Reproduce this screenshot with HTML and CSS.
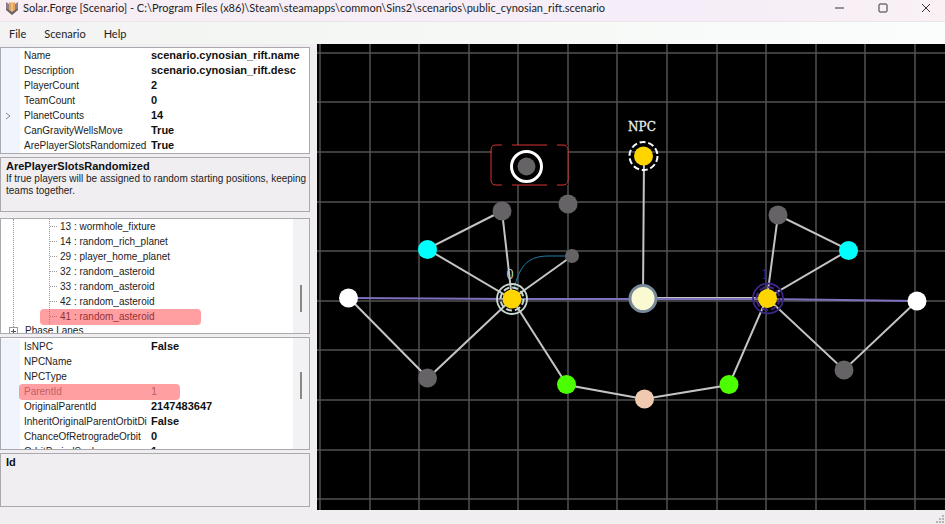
FILE: index.html
```html
<!DOCTYPE html>
<html lang="en">
<head>
  <meta charset="UTF-8">
  <meta name="viewport" content="width=device-width, initial-scale=1.0">
  <title>Solar.Forge</title>
  <link rel="stylesheet" href="styles.css">
</head>
<body>
  <header class="titlebar">
    <svg class="logo" viewBox="0 0 14 14">
      <path d="M1 1L4 3V10L1 7Z" fill="#8b7f86"/>
      <path d="M13 1L10 3V10L13 7Z" fill="#8b7f86"/>
      <path d="M4 1L6 2V11L4 9Z" fill="#e3a35c"/>
      <path d="M10 1L8 2V11L10 9Z" fill="#e3a35c"/>
      <path d="M6 1H8V13H6Z" fill="#f0bd7b"/>
      <path d="M1 7L7 11L13 7V9L7 14L1 9Z" fill="#6d5f66"/>
    </svg>
    <h1>Solar.Forge [Scenario] - C:\Program Files (x86)\Steam\steamapps\common\Sins2\scenarios\public_cynosian_rift.scenario</h1>
    <div class="window-buttons">
      <button aria-label="Minimize"><svg viewBox="0 0 10 10"><path d="M0 5H9"/></svg></button>
      <button aria-label="Maximize"><svg viewBox="0 0 10 10"><rect x="1" y="1" width="8" height="8" rx="1"/></svg></button>
      <button aria-label="Close"><svg viewBox="0 0 10 10"><path d="M1 1L9 9M9 1L1 9"/></svg></button>
    </div>
  </header>

  <nav class="menu">
    <button>File</button>
    <button>Scenario</button>
    <button>Help</button>
  </nav>

  <main>
    <aside>
      <div class="panel">
        <table class="props">
          <tr><td></td><th>Name</th><td>scenario.cynosian_rift.name</td></tr>
          <tr><td></td><th>Description</th><td>scenario.cynosian_rift.desc</td></tr>
          <tr><td></td><th>PlayerCount</th><td>2</td></tr>
          <tr><td></td><th>TeamCount</th><td>0</td></tr>
          <tr><td><svg class="chevron" viewBox="0 0 6 8"><path d="M1 1L5 4L1 7"/></svg></td><th>PlanetCounts</th><td>14</td></tr>
          <tr><td></td><th>CanGravityWellsMove</th><td>True</td></tr>
          <tr><td></td><th>ArePlayerSlotsRandomized</th><td>True</td></tr>
        </table>
      </div>

      <div class="panel help">
        <h2>ArePlayerSlotsRandomized</h2>
        <p>If true players will be assigned to random starting positions, keeping teams together.</p>
      </div>

      <div class="panel tree">
        <ul class="wells">
          <li>13 : wormhole_fixture</li>
          <li>14 : random_rich_planet</li>
          <li>29 : player_home_planet</li>
          <li>32 : random_asteroid</li>
          <li>33 : random_asteroid</li>
          <li>42 : random_asteroid</li>
          <li class="marked">41 : random_asteroid</li>
        </ul>
        <div class="root"><span class="expander"></span>Phase Lanes</div>
        <span class="thumb"></span>
      </div>

      <div class="panel node-props">
        <table class="props">
          <tr><td></td><th>IsNPC</th><td>False</td></tr>
          <tr><td></td><th>NPCName</th><td></td></tr>
          <tr><td></td><th>NPCType</th><td></td></tr>
          <tr class="marked readonly"><td></td><th>ParentId</th><td>1</td></tr>
          <tr><td></td><th>OriginalParentId</th><td>2147483647</td></tr>
          <tr><td></td><th>InheritOriginalParentOrbitDirection</th><td>False</td></tr>
          <tr><td></td><th>ChanceOfRetrogradeOrbit</th><td>0</td></tr>
          <tr><td></td><th>OrbitPeriodScalar</th><td>1</td></tr>
        </table>
        <span class="thumb"></span>
      </div>

      <div class="panel help">
        <h2>Id</h2>
      </div>
    </aside>

    <svg class="map" viewBox="0 0 628 466" preserveAspectRatio="xMidYMid slice">
      <rect width="628" height="466" fill="#000"/>
      <path class="grid" d="M3 0V466M53 0V466M102 0V466M152 0V466M201 0V466M251 0V466M300 0V466M350 0V466M400 0V466M449 0V466M499 0V466M548 0V466M598 0V466
        M0 9H628M0 58H628M0 108H628M0 158H628M0 207H628M0 257H628M0 306H628M0 356H628M0 406H628M0 455H628"/>

      <!-- phase lanes -->
      <path class="lane" d="M185 167L110 205L195 255L185 167M255 212L195 255L111 334L32 254M195 255L250 341L327 355L412 341L450 254L461 171L532 206L450 254L527 326L600 257M326 254L327 112"/>
      <path class="lane" d="M326 254L450 254"/>
      <path class="wormhole" d="M32 254L195 255L326 255L450 255L600 257"/>
      <path class="orbit" d="M197 245C203 219 213 212 232 212H255"/>

      <!-- selection -->
      <rect x="175" y="101" width="76" height="40" fill="#000"/>
      <path class="selection" d="M185 101H179Q174 101 174 106V136Q174 141 179 141H185M195 101H230M195 141H230M240 101H246Q251 101 251 106V136Q251 141 246 141H240"/>
      <circle cx="209.5" cy="122.5" r="15" fill="#000" stroke="#fff" stroke-width="3"/>

      <g fill="#656365">
        <circle cx="209.5" cy="122.5" r="9"/>
        <circle cx="251" cy="160" r="9.5"/>
        <circle cx="185" cy="167" r="9.5"/>
        <circle cx="255" cy="212" r="7"/>
        <circle cx="110.5" cy="334" r="9.5"/>
        <circle cx="461" cy="171" r="9.5"/>
        <circle cx="527" cy="326" r="9.5"/>
      </g>
      <g fill="#0ff">
        <circle cx="110.5" cy="205.5" r="9.5"/>
        <circle cx="531.5" cy="206.5" r="9.5"/>
      </g>
      <g fill="#fff">
        <circle cx="31.5" cy="254" r="9.5"/>
        <circle cx="600" cy="257" r="9.5"/>
      </g>
      <g fill="#4cff00">
        <circle cx="249.5" cy="340.5" r="9.5"/>
        <circle cx="412" cy="340.5" r="9.5"/>
      </g>
      <circle cx="327.5" cy="355" r="9.5" fill="#f0cab0"/>
      <circle cx="326" cy="254.5" r="13" fill="#fafad2" stroke="#778899" stroke-width="3"/>

      <!-- home stars -->
      <circle cx="326.5" cy="112" r="14" fill="none" stroke="#fff" stroke-width="2" stroke-dasharray="6 2.8"/>
      <g fill="none" stroke="#c8d8d0">
        <circle cx="195" cy="255" r="15" stroke-width="1.8"/>
        <circle cx="195" cy="255" r="11.5" stroke-width="2" stroke-dasharray="6 3"/>
      </g>
      <g fill="none" stroke="#3c2585">
        <circle cx="451" cy="254.5" r="15" stroke-width="1.8"/>
        <circle cx="451" cy="254.5" r="11.5" stroke-width="2" stroke-dasharray="6 3"/>
      </g>
      <g fill="#ffd500">
        <circle cx="326.5" cy="112" r="9.5"/>
        <circle cx="195" cy="255" r="9.5"/>
        <circle cx="450.5" cy="254.5" r="9.5"/>
      </g>

      <text class="npc" x="325" y="87">NPC</text>
      <text class="slot" x="193" y="235" fill="#b5d3cc">0</text>
      <text class="slot" x="448" y="235" fill="#3c2585">1</text>
    </svg>
  </main>

  <footer>
    <svg class="grip" viewBox="0 0 9 9"><path d="M6 0h2v2h-2zM6 3h2v2h-2zM6 6h2v2h-2zM3 3h2v2h-2zM3 6h2v2h-2zM0 6h2v2h-2z"/></svg>
  </footer>
</body>
</html>
```
FILE: styles.css
```css
* {
  box-sizing: border-box;
}

body {
  display: flex;
  flex-direction: column;
  height: 100vh;
  margin: 0;
  overflow: hidden;
  background: #f0eef1;
  color: #222;
  font-family: 'Liberation Sans', Arial, sans-serif;
  font-size: 10px;
}

button {
  padding: 0;
  border: none;
  background: none;
  color: inherit;
  font: inherit;
}

.titlebar {
  display: flex;
  align-items: center;
  height: 22px;
  padding: 0 14px 6px 5px;
  border-bottom: 1px solid #ebe4eb;
  background: linear-gradient(90deg, #f8eef4, #f5edf8 70%, #f9f1f4);
}

.logo {
  width: 14px;
  height: 14px;
  margin-right: 4px;
}

.titlebar h1 {
  flex: 1;
  margin: 0;
  font-family: Lato, sans-serif;
  font-size: 11px;
  font-weight: normal;
  line-height: 16px;
  white-space: nowrap;
}

.window-buttons {
  display: flex;
  gap: 33px;
}

.window-buttons svg {
  display: block;
  width: 10px;
  height: 10px;
  fill: none;
  stroke: #333;
}

.menu {
  display: flex;
  gap: 18px;
  height: 22px;
  padding: 0 9px;
  background: linear-gradient(90deg, #f2f3f2, #f6f9f6 60%, #fafdfc);
  font-family: Lato, sans-serif;
  font-size: 11px;
}

main {
  display: flex;
  flex: 1;
  gap: 7px;
  min-height: 0;
}

aside {
  display: grid;
  grid-template-rows: 107px 55px minmax(0, 120fr) minmax(0, 113fr) 54px;
  gap: 3px;
  width: 310px;
  padding: 3px 0;
}

.panel {
  position: relative;
  overflow: hidden;
  border: 1px solid #a9a9ae;
  background: #fff;
}

.props {
  width: 100%;
  border-collapse: collapse;
  table-layout: fixed;
  background: linear-gradient(90deg, #f0f4fd 19px, transparent 19px);
}

.props tr {
  position: relative;
  height: 15px;
}

.props th,
.props td {
  overflow: hidden;
  padding: 0;
  line-height: 15px;
  text-align: left;
  white-space: nowrap;
}

.props th {
  width: 123px;
  font-weight: normal;
}

.props td {
  padding-left: 4px;
  color: #111;
  font-size: 11px;
  font-weight: bold;
}

.props td:first-child {
  width: 23px;
}

.props .readonly th,
.props .readonly td {
  color: #808080;
  font-weight: normal;
}

.chevron {
  display: block;
  width: 6px;
  height: 8px;
  fill: none;
  stroke: #888;
}

.help {
  padding: 1px 0 1px 5px;
  background: #f0eef1;
}

.help h2,
.help p {
  margin: 0;
}

.help h2 {
  color: #111;
  font-size: 11px;
  line-height: 14px;
}

.help p {
  line-height: 12px;
}

.tree {
  margin-top: 3px;
}

.wells {
  margin: 0 0 0 48px;
  padding: 0;
  border-left: 1px dotted #999;
  list-style: none;
}

.wells li {
  position: relative;
  display: flex;
  align-items: center;
  gap: 3px;
  line-height: 15px;
}

.wells li::before {
  content: '';
  width: 7px;
  border-top: 1px dotted #999;
}

.tree::before {
  content: '';
  position: absolute;
  top: 0;
  bottom: 0;
  left: 12px;
  border-left: 1px dotted #999;
}

.root {
  display: flex;
  align-items: center;
  gap: 7px;
  padding-left: 8px;
  line-height: 14px;
}

.expander {
  position: relative;
  width: 9px;
  height: 9px;
  border: 1px solid #999;
  background:
    linear-gradient(#555, #555) center / 5px 1px no-repeat,
    linear-gradient(#555, #555) center / 1px 5px no-repeat,
    #fff;
}

/* red marker strokes over the rows */
.marked::after {
  content: '';
  position: absolute;
  top: 0;
  left: -10px;
  width: 161px;
  height: 16px;
  border-radius: 4px;
  background: rgba(255, 64, 70, 0.5);
}

.props .marked::after {
  left: 18px;
}

.thumb {
  position: absolute;
  top: 0;
  right: 0;
  bottom: 0;
  width: 16px;
  background: linear-gradient(#888, #888) 7px 58% / 2px 27px no-repeat #f2f1f3;
}

.tree .thumb {
  background-position: 7px 76%;
}

.node-props {
  padding-top: 1px;
}

.node-props .thumb {
  background-position: 7px 40%;
}

.map {
  flex: 1;
  min-width: 0;
  height: 100%;
  background: #000;
}

.grid {
  fill: none;
  stroke: #525252;
  stroke-width: 1.5;
}

.lane {
  fill: none;
  stroke: #c4c4c4;
  stroke-width: 2;
}

.wormhole {
  fill: none;
  stroke: #8170bd;
  stroke-width: 2;
}

.orbit {
  fill: none;
  stroke: #1f7fae;
}

.selection {
  fill: none;
  stroke: #d8332f;
}

.npc {
  fill: #e8eef2;
  stroke: #e8eef2;
  stroke-width: 0.3;
  font-family: 'DejaVu Serif', serif;
  font-size: 12px;
  text-anchor: middle;
}

.slot {
  font-family: 'DejaVu Serif', serif;
  font-size: 12px;
  text-anchor: middle;
}

footer {
  display: flex;
  align-items: flex-end;
  justify-content: flex-end;
  height: 14px;
}

.grip {
  width: 9px;
  height: 9px;
  fill: #b5b3b6;
}
```
